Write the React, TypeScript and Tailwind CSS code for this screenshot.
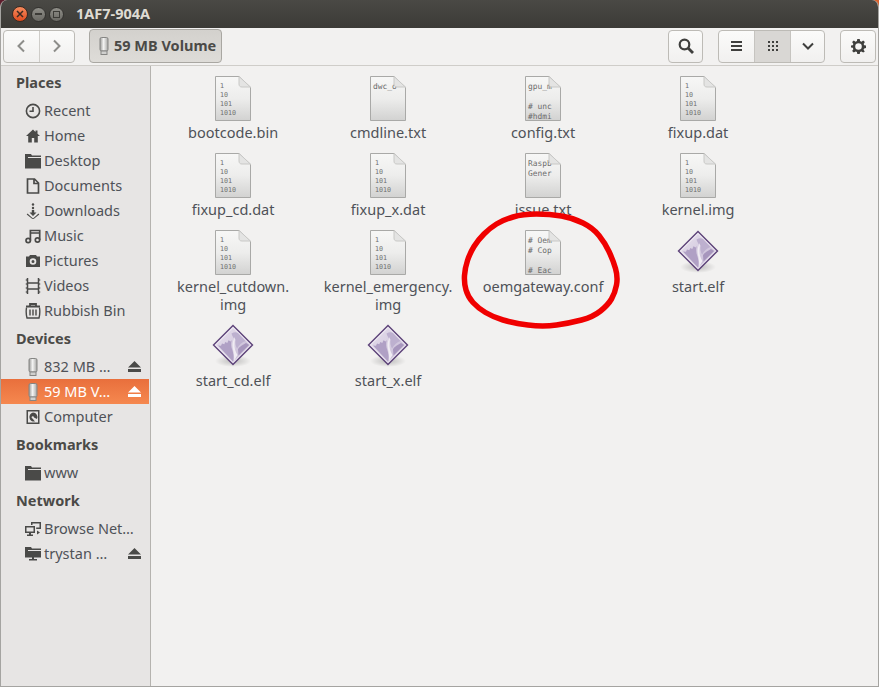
import type { ReactNode } from "react";

const font = "font-['Noto_Sans','Open_Sans',sans-serif]";

const iconCls = "w-4 h-4 fill-[#4a4a48]";

const icons: Record<string, ReactNode> = {
  clock: (
    <svg viewBox="0 0 16 16" className="w-4 h-4 fill-none stroke-[#4a4a48]" strokeWidth="1.6">
      <circle cx="8" cy="8" r="6.6" />
      <path d="M8 4v4.3H4.5" />
    </svg>
  ),
  home: (
    <svg viewBox="0 0 16 16" className={iconCls}>
      <path d="M8 1.5 1 8h2.2v6.5h3.6V10h2.4v4.500h3.600V8H15l-2.500-2.300V2.500h-2v1.400z" />
    </svg>
  ),
  folder: (
    <svg viewBox="0 0 16 16" className={iconCls}>
      <path d="M0 1h6l1 1.500h9V4H3v1h13v10.500H0z" />
    </svg>
  ),
  doc: (
    <svg viewBox="0 0 16 16" className="w-4 h-4 fill-none stroke-[#4a4a48]" strokeWidth="1.7">
      <path d="M2.500 1h7l4 4v10h-11zM9 1v4.500h4.500" />
    </svg>
  ),
  download: (
    <svg viewBox="0 0 16 16" className={iconCls}>
      <circle cx="8" cy="1.500" r="1.200" />
      <circle cx="8" cy="5" r="1.200" />
      <path d="M6.800 7h2.400v2.500h2.300L8 13 4.500 9.500h2.300zM2.500 10.500 8 15.500l5.500-5 .8 1L8 16.500l-6.300-5z" />
    </svg>
  ),
  music: (
    <svg viewBox="0 0 16 16" className="w-4 h-4 fill-none stroke-[#4a4a48]" strokeWidth="1.700">
      <circle cx="3.200" cy="12.500" r="2.200" />
      <circle cx="12.500" cy="12" r="2.200" />
      <path d="M5.400 12.500V2.500h9.300V12M5.400 5h9.300" />
    </svg>
  ),
  camera: (
    <svg viewBox="0 0 16 16" className={iconCls} fillRule="evenodd">
      <path d="M5 2h6l1 1.500h3V14H1V3.500h3zM8 5.200a3.300 3.300 0 1 0 0 6.600 3.300 3.300 0 0 0 0-6.600zM8 7a1.500 1.500 0 1 1 0 3 1.500 1.500 0 0 1 0-3z" />
    </svg>
  ),
  film: (
    <svg viewBox="0 0 16 16" className="w-4 h-4 fill-none stroke-[#4a4a48]" strokeWidth="1.500">
      <path d="M2.500 0v16M13.500 0v16M3 5h10M3 11h10" />
      <path d="M.8 2h1M.8 6h1M.8 10h1M.8 14h1M14.200 2h1M14.200 6h1M14.200 10h1M14.200 14h1" />
    </svg>
  ),
  trash: (
    <svg viewBox="0 0 16 16" className="w-4 h-4 fill-none stroke-[#4a4a48]" strokeWidth="1.400">
      <path d="M1 3.500h14M5 2.500V1h6v1.500" strokeWidth="1.800" />
      <path d="M1.500 4.500c-.5 3.500-.5 7 .5 10.500h12c1-3.500 1-7 .5-10.500" />
      <path d="M5 6.500v6M8 6.500v6M11 6.500v6" />
    </svg>
  ),
  drive: (
    <svg viewBox="0 0 16 18" className="w-4 h-[18px]">
      <defs>
        <linearGradient id="usb" x1="0" x2="1" y1="0" y2="0">
          <stop offset="0" stopColor="#9a9a98" />
          <stop offset="0.45" stopColor="#f4f4f3" />
          <stop offset="1" stopColor="#a5a5a3" />
        </linearGradient>
      </defs>
      <rect x="4" y="0.500" width="8" height="13.500" rx="1.500" fill="url(#usb)" stroke="#858583" />
      <rect x="5" y="14" width="6" height="3.500" fill="#d0d0ce" stroke="#858583" />
    </svg>
  ),
  computer: (
    <svg viewBox="0 0 16 16" className={iconCls} fillRule="evenodd">
      <path d="M1.500 1h13v14h-13zM3 2.500v11h10v-11zM8 3.500a4.500 4.500 0 0 1 4 6.500L9 8.500a1.200 1.200 0 1 0-1.500 1L10 12.500A4.500 4.500 0 1 1 8 3.500z" />
    </svg>
  ),
  network: (
    <svg viewBox="0 0 16 16" className={iconCls} fillRule="evenodd">
      <path d="M0 5h10v7H6v1.500h2V15H2v-1.500h2V12H0zM1.500 6.500v4h7v-4z" />
      <path d="M6 1h10v7h-4.800V6.500h3.300v-4h-7V4H6zM12 9.500l3 2-3 2z" />
    </svg>
  ),
  server: (
    <svg viewBox="0 0 16 16" className={iconCls}>
      <path d="M0 1h6l1 1.500h9V4H3v1h13v6.500H9V13h3v1.500H4V13h3v-1.500H0z" />
    </svg>
  ),
};

function Eject({ light }: { light?: boolean }) {
  return (
    <svg viewBox="0 0 13 11" className={`w-[13px] h-[11px] ${light ? "fill-white" : "fill-[#4a4a48]"}`}>
      <path d="M6.500 0 13 6.500H0zM0 8h13v3H0z" />
    </svg>
  );
}

function Header({ children }: { children: ReactNode }) {
  return (
    <div className="h-[31px] pl-[15px] flex items-center text-[14.5px] font-bold text-[#4b4a47]">{children}</div>
  );
}

function Row({ icon, label, eject, active }: { icon: string; label: string; eject?: boolean; active?: boolean }) {
  return (
    <div
      className={`h-[25px] pl-[24px] pr-[8px] flex items-center ${
        active ? "bg-gradient-to-b from-[#e96f3c] to-[#f5884f] text-white" : "text-[#4f5258]"
      }`}
    >
      <span className="w-[16px] flex justify-center shrink-0">{icons[icon]}</span>
      <span className="ml-[3px] flex-1 text-[14.5px] whitespace-nowrap">{label}</span>
      {eject && <Eject light={active} />}
    </div>
  );
}

function DocIcon({ lines, big }: { lines: string[]; big?: boolean }) {
  return (
    <svg viewBox="0 0 36 45" className="w-[36px] h-[45px]">
      <defs>
        <linearGradient id="paper" x1="0" x2="0" y1="0" y2="1">
          <stop offset="0" stopColor="#f7f7f6" />
          <stop offset="0.5" stopColor="#ededec" />
          <stop offset="1" stopColor="#d2d2d1" />
        </linearGradient>
      </defs>
      <path d="M.5.500H24L35.500 11.500V44.500H.5z" fill="url(#paper)" stroke="#a9a9a7" />
      {lines.map((line, i) =>
        line ? (
          <text
            key={i}
            x={big ? 3 : 5}
            y={big ? 12.500 + i * 10.200 : 11.500 + i * 9}
            fontSize={big ? 7.900 : 6.700}
            fontFamily="'DejaVu Sans Mono', monospace"
            fill={big ? "#6c6c6c" : "#6e6e6e"}
          >
            {line}
          </text>
        ) : null
      )}
      <path d="M24 .5V8c0 2 1 3 3 3h8.500z" fill="#e4e4e3" stroke="#c8c8c6" />
    </svg>
  );
}

function ElfIcon() {
  return (
    <svg viewBox="0 0 44 46" className="w-[44px] h-[46px]">
      <defs>
        <linearGradient id="elf" x1="0" x2="1" y1="0" y2="1">
          <stop offset="0" stopColor="#e9e3ee" />
          <stop offset="0.55" stopColor="#d5cbe0" />
          <stop offset="1" stopColor="#b7a8ca" />
        </linearGradient>
        <radialGradient id="shade" cx="0.5" cy="0.5" r="0.5">
          <stop offset="0" stopColor="#00000038" />
          <stop offset="1" stopColor="#00000000" />
        </radialGradient>
      </defs>
      <ellipse cx="22" cy="38" rx="18" ry="6" fill="url(#shade)" />
      <path d="M22 2.500 41.500 22 22 41.500 2.500 22z" fill="url(#elf)" stroke="#5d4379" strokeWidth="1.400" />
      <path d="M22 4.500 39.500 22 22 39.500 4.500 22z" fill="none" stroke="#f3eff6" strokeWidth="1" />
      <path d="M7 22.500l3 .2 1-2.200 2.300 .8 1-2.400 2 1 1.200-2.600 2.200 1.200 1-1.500c-.8 3.500-.6 7 .6 10 1 3 1.800 6 .7 10.500L22 38.500z" fill="#b0a0c5" />
      <path d="M20.500 10.500c2.500-1.500 5-1.500 6.500-.5l7.500 8c-3 1-6.500 4-8.500 7.500-1.500-3-2.200-6-1.300-9-1.800-.6-3.200-2.800-4.200-6z" fill="#bdb0cf" />
      <path d="M23.500 20c-.5 5 1 9 3 12l-3.500 6c.8-6-1.500-12-1.500-16 0-3 1-5 2.500-8z" fill="#f0ecf3" />
      <path d="M27 26c2-2.500 4.500-4 8-6l3 2-10.500 10.500z" fill="#a796bd" />
    </svg>
  );
}

type Item = { name: ReactNode; kind: "bin" | "elf" | "text"; lines?: string[]; twoLine?: boolean };

const BIN = ["1", "10", "101", "1010"];

const files: Item[] = [
  { name: "bootcode.bin", kind: "bin" },
  { name: "cmdline.txt", kind: "text", lines: ["dwc_o"] },
  { name: "config.txt", kind: "text", lines: ["gpu_m", "", "# unc", "#hdmi"] },
  { name: "fixup.dat", kind: "bin" },
  { name: "fixup_cd.dat", kind: "bin" },
  { name: "fixup_x.dat", kind: "bin" },
  { name: "issue.txt", kind: "text", lines: ["Raspb", "Gener"] },
  { name: "kernel.img", kind: "bin" },
  { name: <>kernel_cutdown.<br />img</>, kind: "bin", twoLine: true },
  { name: <>kernel_emergency.<br />img</>, kind: "bin", twoLine: true },
  { name: "oemgateway.conf", kind: "text", lines: ["# Oem", "# Cop", "", "# Eac"] },
  { name: "start.elf", kind: "elf" },
  { name: "start_cd.elf", kind: "elf" },
  { name: "start_x.elf", kind: "elf" },
];

function FileItem({ item }: { item: Item }) {
  return (
    <div className="flex flex-col items-center">
      <div className="h-[46px] flex items-center justify-center">
        {item.kind === "elf" ? (
          <ElfIcon />
        ) : item.kind === "bin" ? (
          <DocIcon lines={BIN} />
        ) : (
          <DocIcon lines={item.lines ?? []} big />
        )}
      </div>
      <div
        className={`mt-[2px] text-center text-[14.5px] leading-[18px] text-[#4f5258] whitespace-nowrap ${
          item.twoLine ? "pb-[10px]" : "pb-[11px]"
        }`}
      >
        {item.name}
      </div>
    </div>
  );
}

function ToolButton({ children, className = "" }: { children: ReactNode; className?: string }) {
  return (
    <div
      className={`h-[33px] flex items-center justify-center bg-gradient-to-b from-[#fbfbfa] to-[#f1f0ef] border border-[#bdbbb6] rounded-[4px] ${className}`}
    >
      {children}
    </div>
  );
}

// wobbly marker ring, rounded through the midpoints of these points
const ring = [
  [523, 214], [503, 220], [490, 228], [478, 240], [470, 253], [465, 268], [464, 283], [468, 297],
  [478, 308], [493, 317], [513, 323], [543, 327], [570, 323], [593, 317], [608, 305], [615, 293],
  [618, 277], [613, 260], [605, 243], [593, 228], [573, 218], [550, 214],
];

function ringPath() {
  const mid = (a: number[], b: number[]) => `${(a[0] + b[0]) / 2} ${(a[1] + b[1]) / 2}`;
  let d = `M${mid(ring[ring.length - 1], ring[0])}`;
  ring.forEach((p, i) => {
    d += ` Q${p[0]} ${p[1]} ${mid(p, ring[(i + 1) % ring.length])}`;
  });
  return d + "z";
}

export default function App() {
  return (
    <div className={`relative w-[879px] h-[687px] overflow-hidden bg-gradient-to-r from-[#5e1d2c] to-[#d9632f] ${font}`}>
      <div className="h-full flex flex-col rounded-t-[7px] overflow-hidden border-x border-b border-[#a5a4a1] bg-[#f2f1f0]">
        {/* title bar */}
        <div className="h-[28px] shrink-0 flex items-center bg-gradient-to-b from-[#4a4945] to-[#3c3b37] pl-[11px]">
          <div className="w-[16px] h-[16px] rounded-full bg-gradient-to-b from-[#f58a5c] to-[#df4a1c] border border-[#3a2a22] flex items-center justify-center">
            <svg viewBox="0 0 8 8" className="w-2 h-2 stroke-[#3c2a22] fill-none" strokeWidth="1.500">
              <path d="M1 1l6 6M7 1 1 7" />
            </svg>
          </div>
          <div className="ml-[3px] w-[15px] h-[15px] rounded-full bg-gradient-to-b from-[#8f8e88] to-[#6a6964] border border-[#33322f] flex items-center justify-center">
            <div className="w-[7px] h-[2px] bg-[#3c3b37]" />
          </div>
          <div className="ml-[3px] w-[15px] h-[15px] rounded-full bg-gradient-to-b from-[#8f8e88] to-[#6a6964] border border-[#33322f] flex items-center justify-center">
            <div className="w-[7px] h-[7px] border border-[#3c3b37]" />
          </div>
          <span className="ml-[12px] text-[14.5px] font-bold text-[#dfdbd2]">1AF7-904A</span>
        </div>

        {/* toolbar */}
        <div className="h-[38px] shrink-0 flex items-center pl-[2px] pr-[2px] pb-[1px] bg-[#f2f1f0] border-b border-[#cfcdc9]">
          <ToolButton className="w-[72px]">
            <div className="flex-1 h-full flex items-center justify-center border-r border-[#cfcdc9]">
              <svg viewBox="0 0 10 14" className="w-[10px] h-[14px] fill-none stroke-[#8d8d8a]" strokeWidth="2">
                <path d="M8 1.500 2.500 7 8 12.500" />
              </svg>
            </div>
            <div className="flex-1 h-full flex items-center justify-center">
              <svg viewBox="0 0 10 14" className="w-[10px] h-[14px] fill-none stroke-[#8d8d8a]" strokeWidth="2">
                <path d="M2 1.500 7.500 7 2 12.500" />
              </svg>
            </div>
          </ToolButton>
          <div className="ml-[14px] w-[133px] h-[34px] flex items-center pl-[6px] rounded-[4px] border border-[#a9a7a2] bg-gradient-to-b from-[#d3d1cd] to-[#dedcd8]">
            {icons.drive}
            <span className="ml-[2px] text-[14.5px] font-bold text-[#4b4a47] whitespace-nowrap">59 MB Volume</span>
          </div>
          <div className="flex-1" />
          <ToolButton className="w-[35px]">
            <svg viewBox="0 0 16 16" className="w-4 h-4 fill-none stroke-[#3f3f3d]" strokeWidth="2.200">
              <circle cx="6.500" cy="6.500" r="4.800" />
              <path d="M10 10l5 5" strokeWidth="2.800" />
            </svg>
          </ToolButton>
          <ToolButton className="ml-[15px] w-[107px] overflow-hidden">
            <div className="w-[35px] h-full flex items-center justify-center">
              <div className="w-[11px] h-[10px] border-y-2 border-[#3f3f3d] flex items-center">
                <div className="w-full h-[2px] bg-[#3f3f3d]" />
              </div>
            </div>
            <div className="w-[37px] h-full flex items-center justify-center bg-[#d9d7d4] border-x border-[#c6c4c0]">
              <div className="grid grid-cols-3 gap-[2px]">
                {Array.from({ length: 9 }).map((_, i) => (
                  <div key={i} className="w-[2px] h-[2px] bg-[#3f3f3d]" />
                ))}
              </div>
            </div>
            <div className="flex-1 h-full flex items-center justify-center">
              <svg viewBox="0 0 12 8" className="w-3 h-2 fill-none stroke-[#3f3f3d]" strokeWidth="2">
                <path d="M1 1.500 6 6.500 11 1.500" />
              </svg>
            </div>
          </ToolButton>
          <ToolButton className="ml-[15px] w-[36px]">
            <svg viewBox="0 0 16 16" className="w-[15px] h-[15px] fill-[#3f3f3d]" fillRule="evenodd">
              <path d="M6.700 0h2.600l.4 2.200 1.400.6L13 1.500 14.800 3.300 13.500 5.200l.6 1.400 1.900.4v2.600l-2 .4-.6 1.400 1.300 1.900L13 14.500l-1.900-1.300-1.400.6-.4 2.200H6.700l-.4-2.200-1.400-.6L3 14.500 1.200 12.700l1.300-1.900-.6-1.400L0 9V7l1.900-.4.600-1.400L1.200 3.300 3 1.500l1.900 1.300 1.400-.6zM8 4.500a3.500 3.500 0 1 0 0 7 3.500 3.500 0 0 0 0-7z" />
            </svg>
          </ToolButton>
        </div>

        {/* body */}
        <div className="flex-1 flex min-h-0">
          <div className="w-[149px] shrink-0 pt-[1px] pr-px bg-[#e7e5e4]">
            <Header>Places</Header>
            <Row icon="clock" label="Recent" />
            <Row icon="home" label="Home" />
            <Row icon="folder" label="Desktop" />
            <Row icon="doc" label="Documents" />
            <Row icon="download" label="Downloads" />
            <Row icon="music" label="Music" />
            <Row icon="camera" label="Pictures" />
            <Row icon="film" label="Videos" />
            <Row icon="trash" label="Rubbish Bin" />
            <Header>Devices</Header>
            <Row icon="drive" label="832 MB …" eject />
            <Row icon="drive" label="59 MB V…" eject active />
            <Row icon="computer" label="Computer" />
            <Header>Bookmarks</Header>
            <Row icon="folder" label="www" />
            <Header>Network</Header>
            <Row icon="network" label="Browse Net…" />
            <Row icon="server" label="trystan …" eject />
          </div>
          <div className="w-px shrink-0 bg-[#b5b3af]" />
          <div className="flex-1 pt-[9px] pl-[4.6px] grid grid-cols-[repeat(4,155px)] content-start">
            {files.map((f, i) => (
              <FileItem key={i} item={f} />
            ))}
          </div>
        </div>
      </div>

      {/* hand-drawn circle on top of the screenshot */}
      <svg viewBox="0 0 879 687" className="absolute left-0 top-0 w-[879px] h-[687px] pointer-events-none fill-none">
        <path d={ringPath()} stroke="#f00000" strokeWidth="5.500" strokeLinejoin="round" />
      </svg>
    </div>
  );
}
